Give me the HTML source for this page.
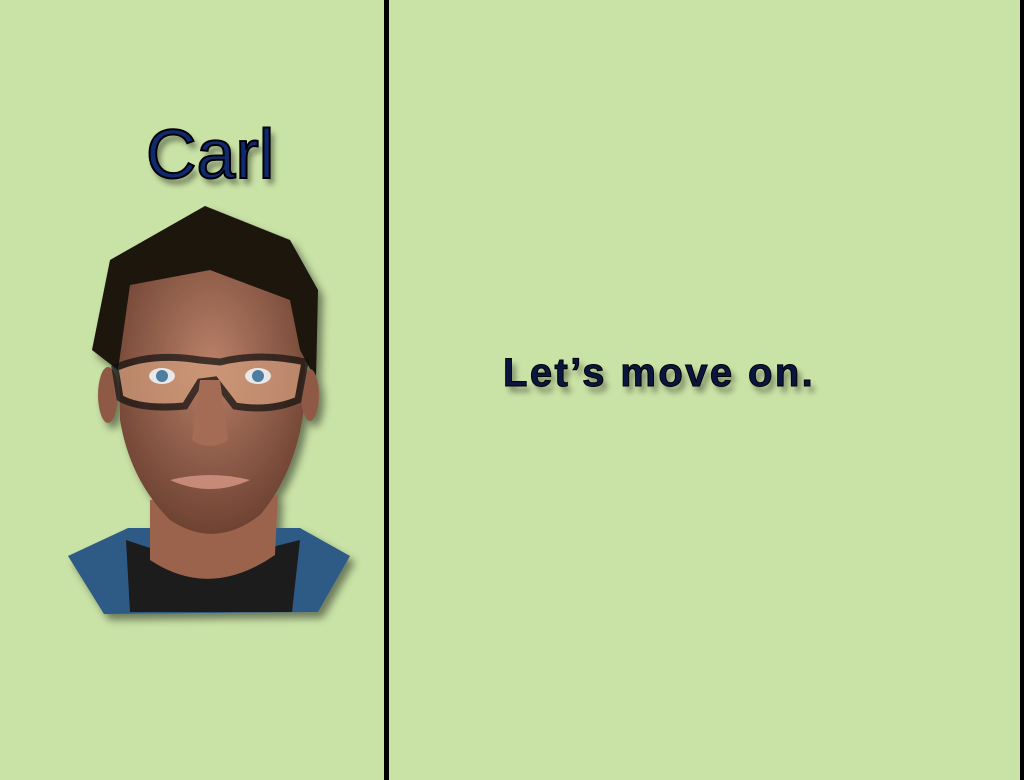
<!DOCTYPE html>
<html><head><style>
html,body{margin:0;padding:0}
body{width:1024px;height:780px;background:#c9e2a6;position:relative;overflow:hidden;font-family:"Liberation Sans",sans-serif}
.vl{position:absolute;left:384px;top:0;width:5px;height:780px;background:#000}
.vr{position:absolute;left:1020px;top:0;width:4px;height:780px;background:#000}
.name{position:absolute;left:146px;top:114px;font-size:70px;color:#102a72;-webkit-text-stroke:2px #000;text-shadow:4px 6px 6px rgba(0,0,0,.45);letter-spacing:0px}
.msg{position:absolute;left:503px;top:351px;font-size:40px;font-weight:bold;color:#0b1640;-webkit-text-stroke:1px #000;text-shadow:4px 6px 6px rgba(0,0,0,.4);letter-spacing:2.4px}
</style></head><body>
<div class="vl"></div><div class="vr"></div>
<div class="name">Carl</div>
<div class="msg">Let’s move on.</div>
<svg style="position:absolute;left:0;top:0" width="384" height="780">
<defs><filter id="s"><feDropShadow dx="5" dy="6" stdDeviation="4" flood-opacity="0.45"/></filter>
<radialGradient id="sk" cx="50%" cy="40%" r="60%"><stop offset="0" stop-color="#b98068"/><stop offset="1" stop-color="#6e4232"/></radialGradient></defs>
<g filter="url(#s)">
<path d="M68 556 L128 528 L300 528 L350 556 L318 612 L104 614 Z" fill="#2f5a86"/>
<path d="M126 540 L150 548 L212 560 L276 546 L300 540 L292 612 L130 612 Z" fill="#1c1c1c"/>
<path d="M150 500 L150 560 Q210 600 275 555 L278 495 Z" fill="#9b634c"/>
<path d="M118 300 Q120 250 210 250 Q300 255 305 320 L305 400 Q298 470 260 515 Q215 550 170 520 Q130 480 120 420 Z" fill="url(#sk)"/>
<path d="M92 350 L110 260 L205 206 L290 240 L318 290 L316 380 L300 350 L290 300 L210 270 L130 285 L118 370 Z" fill="#1a120e"/>
<ellipse cx="108" cy="395" rx="10" ry="28" fill="#8e5a45"/>
<ellipse cx="310" cy="395" rx="9" ry="26" fill="#8e5a45"/>
<path d="M115 368 Q150 352 200 360 L220 362 Q260 352 305 362 L298 400 Q270 412 235 406 L215 380 L200 382 L185 406 Q140 410 120 398 Z" fill="#d59f7e" opacity=".7" stroke="#111" stroke-width="7"/>
<ellipse cx="162" cy="376" rx="13" ry="8" fill="#e8e8e8"/><circle cx="162" cy="376" r="6" fill="#4d7ea0"/>
<ellipse cx="258" cy="376" rx="13" ry="8" fill="#e8e8e8"/><circle cx="258" cy="376" r="6" fill="#4d7ea0"/>
<path d="M170 480 Q210 470 250 480 Q210 498 170 480Z" fill="#c88a78"/>
<path d="M200 380 L192 440 Q210 452 228 440 L220 380Z" fill="#a56c55"/>
</g>
</svg>
</body></html>
